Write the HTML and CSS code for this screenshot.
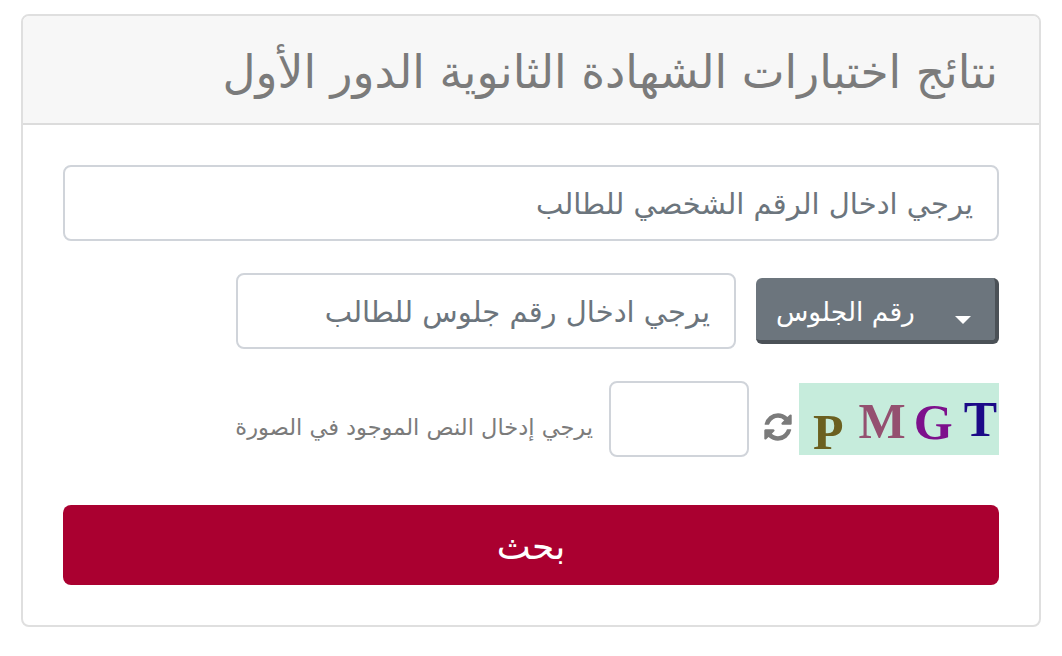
FILE: index.html
```html
<!DOCTYPE html>
<html lang="ar" dir="rtl">
<head>
  <meta charset="UTF-8">
  <title>نتائج اختبارات الشهادة الثانوية</title>
  <link rel="stylesheet" href="styles.css">
</head>
<body>
  <div class="card">
    <div class="card-header">نتائج اختبارات الشهادة الثانوية الدور الأول</div>
    <form class="card-body">
      <input class="field" type="text" placeholder="يرجي ادخال الرقم الشخصي للطالب">
      <div class="seat-row">
        <button class="dropdown" type="button">
          <span>رقم الجلوس</span>
          <span class="caret"></span>
        </button>
        <input class="field seat-input" type="text" placeholder="يرجي ادخال رقم جلوس للطالب">
      </div>
      <div class="captcha-row">
        <div class="captcha">
          <span class="c-p">P</span>
          <span class="c-m">M</span>
          <span class="c-g">G</span>
          <span class="c-t">T</span>
        </div>
        <svg class="refresh" viewBox="0 0 1792 1792"><path d="M1639 1056q0 5-1 7-64 268-268 434.5t-478 166.5q-146 0-282.5-55t-243.5-157l-129 129q-19 19-45 19t-45-19-19-45v-448q0-26 19-45t45-19h448q26 0 45 19t19 45-19 45l-137 137q71 66 161 102t187 36q134 0 250-65t186-179q11-17 53-117 8-23 30-23h192q13 0 22.5 9.5t9.5 22.5zm25-800v448q0 26-19 45t-45 19h-448q-26 0-45-19t-19-45 19-45l138-138q-148-137-349-137-134 0-250 65t-186 179q-11 17-53 117-8 23-30 23h-199q-13 0-22.5-9.5t-9.5-22.5v-7q65-268 270-434.5t480-166.5q146 0 284 55.5t245 156.5l130-129q19-19 45-19t45 19 19 45z"/></svg>
        <input class="field captcha-input" type="text">
        <span class="captcha-label">يرجي إدخال النص الموجود في الصورة</span>
      </div>
      <button class="search" type="button">بحث</button>
    </form>
  </div>
</body>
</html>
```

FILE: styles.css
```css
* {
  box-sizing: border-box;
}
body {
  margin: 0;
  padding: 14px 21px;
  background: #fff;
  font-family: "DejaVu Sans", "Noto Sans", sans-serif;
}
.card {
  width: 1020px;
  height: 613px;
  border: 2px solid #dfdfdf;
  border-radius: 8px;
  overflow: hidden;
}
.card-header {
  height: 109px;
  padding: 5px 41px 0;
  display: flex;
  align-items: center;
  background: #f7f7f7;
  border-bottom: 2px solid #dcdcdc;
  color: #7b7b7b;
  font-size: 45.5px;
  white-space: nowrap;
}
.card-body {
  padding: 40px 40px 0;
  display: flex;
  flex-direction: column;
}
.field {
  height: 76px;
  padding: 2px 24px 0;
  border: 2px solid #d0d4da;
  border-radius: 8px;
  font-family: inherit;
  font-size: 29px;
  background: #fff;
}
.field::placeholder {
  color: #6c757d;
  opacity: 1;
}
.seat-row {
  display: flex;
  align-items: center;
  gap: 20px;
  margin-top: 32px;
}
.dropdown {
  width: 243px;
  height: 66px;
  padding: 4px 0 0 20px;
  display: flex;
  align-items: center;
  direction: ltr;
  background: #6c757d;
  border: 0;
  border-right: 4px solid #4b5157;
  border-bottom: 4px solid #4b5157;
  border-radius: 6px;
  color: #fff;
  font-family: inherit;
  font-size: 26.5px;
}
.caret {
  width: 0;
  height: 0;
  margin-left: 40px;
  margin-top: 18px;
  border-left: 8px solid transparent;
  border-right: 8px solid transparent;
  border-top: 8px solid #fff;
}
.seat-input {
  width: 500px;
}
.captcha-row {
  display: flex;
  align-items: center;
  margin-top: 32px;
}
.captcha {
  width: 200px;
  height: 72px;
  display: flex;
  direction: ltr;
  padding-left: 14px;
  background: #c6ecdc;
  font-family: "Liberation Serif", serif;
  font-weight: bold;
  font-size: 50px;
  line-height: 1.15;
}
.captcha span {
  filter: blur(0.5px);
}
.c-p { color: #6b6020; margin-top: 21px; }
.c-m { color: #945070; margin-top: 10px; margin-left: 15px; }
.c-g { color: #7d108c; margin-top: 11px; margin-left: 8px; }
.c-t { color: #1c0a88; margin-top: 8px; margin-left: 11px; }
.refresh {
  width: 32px;
  height: 32px;
  margin: 16px 5px 0 13px;
  fill: #7b7b7b;
}
.captcha-input {
  width: 140px;
}
.captcha-label {
  margin-top: 16px;
  margin-right: 16px;
  color: #7b7b7b;
  font-size: 22.5px;
  white-space: nowrap;
}
.search {
  height: 80px;
  margin-top: 48px;
  padding-top: 4px;
  background: #aa0030;
  border: 0;
  border-radius: 8px;
  color: #fff;
  font-family: inherit;
  font-size: 36px;
}
```
